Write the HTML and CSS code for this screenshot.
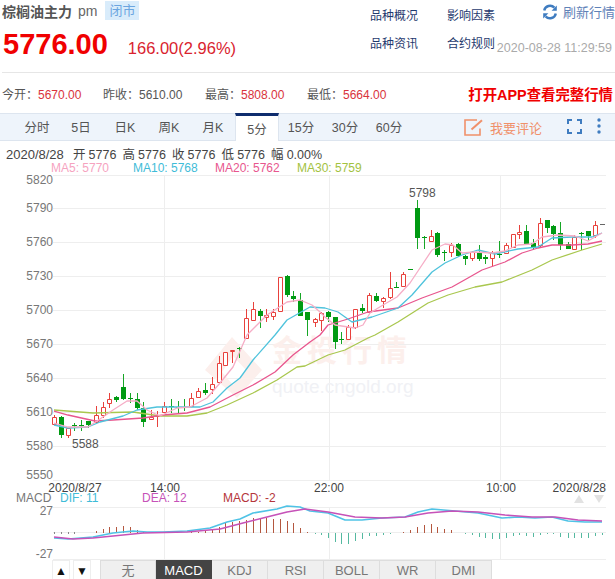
FILE: index.html
```html
<!DOCTYPE html>
<html lang="zh-CN">
<head>
  <meta charset="UTF-8" />
  <meta name="viewport" content="width=device-width, initial-scale=1.0" />
  <title>棕榈油主力 pm</title>
  <link rel="stylesheet" href="styles.css">
</head>
<body>
  <div class="quote-head">
    <div class="quote-main">
      <div class="quote-name">
        <b>棕榈油主力</b>
        <span class="quote-code">pm</span>
        <span class="quote-state">闭市</span>
      </div>
      <div class="quote-price">
        <span class="price-now">5776.00</span>
        <span class="price-change">166.00(2.96%)</span>
      </div>
    </div>
    <div class="quote-links">
      <a href="#">品种概况</a>
      <a href="#">影响因素</a>
      <a href="#">品种资讯</a>
      <a href="#">合约规则</a>
    </div>
    <div class="quote-side">
      <a class="refresh" href="#">
        <svg class="refresh-icon" viewBox="0 0 16 16">
          <path d="M2.2 6.6A6 6 0 0 1 12.4 3.6" />
          <path d="M13.8 9.4A6 6 0 0 1 3.6 12.4" />
          <path class="fill" d="M14.8 1.6V6.8H9.6z" />
          <path class="fill" d="M1.2 14.4V9.2H6.4z" />
        </svg>
        刷新行情
      </a>
      <span class="quote-time">2020-08-28 11:29:59</span>
    </div>
  </div>

  <div class="stats">
    <span class="stat">今开：<em>5670.00</em></span>
    <span class="stat">昨收：5610.00</span>
    <span class="stat">最高：<em>5808.00</em></span>
    <span class="stat">最低：<em>5664.00</em></span>
    <a class="open-app" href="#">打开APP查看完整行情</a>
  </div>

  <div class="period-bar">
    <a class="period" href="#">分时</a>
    <a class="period" href="#">5日</a>
    <a class="period" href="#">日K</a>
    <a class="period" href="#">周K</a>
    <a class="period" href="#">月K</a>
    <a class="period active" href="#">5分</a>
    <a class="period" href="#">15分</a>
    <a class="period" href="#">30分</a>
    <a class="period" href="#">60分</a>
    <a class="comment" href="#">
      <svg class="comment-icon" viewBox="0 0 20 17">
        <path d="M16 9.5V16H1V1H13" />
        <path d="M7.5 10.5L18 1.2" stroke-width="2" />
      </svg>
      我要评论
    </a>
    <svg class="full-icon" viewBox="0 0 15 15">
      <path d="M1 5V1H5M10 1H14V5M14 10V14H10M5 14H1V10" />
    </svg>
    <svg class="more-icon" viewBox="0 0 4 16">
      <circle cx="2" cy="2" r="1.7" />
      <circle cx="2" cy="8" r="1.7" />
      <circle cx="2" cy="14" r="1.7" />
    </svg>
  </div>

  <div class="bar-info"><span class="bar-date">2020/8/28</span>&nbsp; 开 5776&nbsp; 高 5776&nbsp; 收 5776&nbsp; 低 5776&nbsp; 幅 0.00%</div>

  <svg class="chart" viewBox="0 160 615 400">
    <!-- legend -->
    <text class="ma5-text" x="51" y="172">MA5: 5770</text>
    <text class="ma10-text" x="133" y="172">MA10: 5768</text>
    <text class="ma20-text" x="215" y="172">MA20: 5762</text>
    <text class="ma30-text" x="297" y="172">MA30: 5759</text>

    <!-- grid -->
    <path class="grid" d="M53 175.5H606M53 208.5H606M53 242.5H606M53 276.5H606M53 310.5H606M53 344.5H606M53 378.5H606M53 412.5H606M53 446.5H606M53 480.5H606M164.5 175V480M329.5 175V480M500.5 175V480" />
    <path class="grid" d="M53 507.5H606M53 559.5H606M164.5 507V559M329.5 507V559M500.5 507V559" />

    <!-- watermark -->
    <path class="mark-logo" d="M205 370L232 337L262 370L237 398ZM222 372L233 385L246 370L233 356Z" fill-rule="evenodd" />
    <text class="mark-name" x="272" y="361">金投行情</text>
    <text class="mark-url" x="272" y="393">quote.cngold.org</text>

    <!-- price axis -->
    <g class="axis-y">
      <text x="53" y="184">5820</text>
      <text x="53" y="212">5790</text>
      <text x="53" y="246">5760</text>
      <text x="53" y="280">5730</text>
      <text x="53" y="314">5700</text>
      <text x="53" y="348">5670</text>
      <text x="53" y="382">5640</text>
      <text x="53" y="416">5610</text>
      <text x="53" y="450">5580</text>
      <text x="53" y="479">5550</text>
      <text x="53" y="515">27</text>
      <text x="53" y="558">-27</text>
    </g>

    <!-- candles -->
    <path class="wick-up" d="M54.5 415V425M68.5 428V438M96.5 406V423M103.5 402V418M109.5 393V408M151.5 410V419M157.5 411V427M164.5 402V413M191.5 393V407M198.5 388V398M212.5 377V394M219.5 356V383M225.5 352V365M232.5 350V363M246.5 309V338M253.5 302V320M266.5 309V322M273.5 309V320M280.5 277V311M315.5 318V327M321.5 312V331M348.5 325V339M355.5 309V329M369.5 293V312M383.5 297V308M390.5 272V299M403.5 272V286M431.5 230V241M451.5 243V257M472.5 251V261M492.5 251V266M506.5 243V254M513.5 234V247M519.5 225V239M540.5 218V248M574.5 235V250M595.5 221V238" />
    <path class="body-up" d="M52.5 417.5h4v7h-4zM66.5 428.5h4v7h-4zM94.5 415.5h4v7h-4zM101.5 407.5h4v8h-4zM107.5 399.5h4v4h-4zM149.5 417.5h4v2h-4zM155.5 415.5h4v1h-4zM162.5 406.5h4v6h-4zM189.5 398.5h4v8h-4zM196.5 391.5h4v6h-4zM210.5 384.5h4v5h-4zM217.5 363.5h4v19h-4zM223.5 352.5h4v13h-4zM230.5 350.5h4v1h-4zM244.5 318.5h4v20h-4zM251.5 309.5h4v11h-4zM264.5 315.5h4v2h-4zM271.5 312.5h4v4h-4zM278.5 277.5h4v34h-4zM313.5 319.5h4v3h-4zM319.5 313.5h4v7h-4zM346.5 327.5h4v12h-4zM353.5 309.5h4v18h-4zM367.5 295.5h4v17h-4zM381.5 298.5h4v3h-4zM388.5 288.5h4v9h-4zM401.5 274.5h4v12h-4zM429.5 236.5h4v5h-4zM449.5 245.5h4v7h-4zM470.5 252.5h4v6h-4zM490.5 252.5h4v6h-4zM504.5 245.5h4v8h-4zM511.5 234.5h4v13h-4zM517.5 232.5h4v2h-4zM538.5 223.5h4v22h-4zM572.5 237.5h4v12h-4zM593.5 225.5h4v10h-4z" />
    <path class="wick-down" d="M61.5 416V438M74.5 423V431M81.5 420V431M88.5 421V428M116.5 396V402M123.5 374V400M130.5 393V403M137.5 393V410M143.5 402V427M171.5 399V413M178.5 401V413M184.5 399V411M205.5 383V395M239.5 347V358M260.5 309V328M287.5 275V297M293.5 291V302M300.5 293V316M307.5 312V336M328.5 311V322M335.5 317V349M341.5 332V344M362.5 304V313M376.5 293V302M396.5 282V288M417.5 200V249M424.5 236V249M437.5 232V257M444.5 250V261M458.5 243V257M465.5 255V265M479.5 245V261M485.5 255V264M499.5 241V258M526.5 225V245M533.5 239V250M547.5 220V233M553.5 225V240M560.5 222V250M568.5 242V249M581.5 232V250M588.5 231V240" />
    <path class="body-down" d="M59 417h5v18h-5zM72 425h5v1h-5zM79 425h5v1h-5zM86 421h5v4h-5zM114 397h5v3h-5zM121 387h5v12h-5zM128 398h5v1h-5zM135 399h5v9h-5zM141 408h5v14h-5zM169 406h5v1h-5zM176 407h5v1h-5zM182 407h5v1h-5zM203 390h5v3h-5zM237 348h5v1h-5zM258 311h5v5h-5zM285 276h5v19h-5zM291 296h5v3h-5zM298 300h5v16h-5zM305 312h5v8h-5zM326 312h5v5h-5zM333 317h5v25h-5zM339 339h5v1h-5zM360 308h5v3h-5zM374 296h5v5h-5zM394 287h5v1h-5zM408 269h5v1h-5zM415 208h5v30h-5zM422 237h5v1h-5zM435 233h5v22h-5zM442 252h5v1h-5zM456 244h5v12h-5zM463 256h5v3h-5zM477 252h5v7h-5zM483 257h5v2h-5zM497 254h5v1h-5zM524 231h5v13h-5zM531 243h5v4h-5zM545 220h5v8h-5zM551 226h5v8h-5zM558 233h5v12h-5zM566 244h5v5h-5zM579 233h5v1h-5zM586 231h5v5h-5z" />
    <path class="body-flat" d="M600 224h5v1h-5z" />

    <!-- moving averages -->
    <polyline class="ma30" points="54,410 93,413 133,412 160,416 187,416 207,413 227,405 253,393 277,380 297,367 305,366 328,355 345,350 368,338 375,335 398,322 428,303 448,295 475,287 502,282 532,270 552,260 582,250 602,244" />
    <polyline class="ma20" points="54,411 68,415 95,421 113,420 143,418 163,415 187,413 210,407 233,395 253,385 275,372 293,355 310,342 320,335 328,325 348,319 368,312 398,308 422,298 452,287 468,278 482,270 505,262 522,253 538,248 552,245 572,245 588,244 602,241" />
    <polyline class="ma10" points="54,425 68,428 88,427 100,422 123,416 137,410 157,407 177,407 200,407 213,402 227,388 240,378 253,360 275,335 287,320 310,307 325,308 338,312 352,322 372,317 398,308 412,295 432,272 445,263 462,255 478,250 495,254 518,249 538,247 552,238 572,237 592,237 602,233" />
    <polyline class="ma5" points="54,423 68,427 88,427 100,419 113,410 127,401 137,401 147,410 160,416 177,408 190,407 207,398 220,383 233,367 247,335 267,315 287,302 300,300 312,305 320,312 325,317 335,325 355,328 363,325 370,313 383,305 397,297 410,283 422,265 432,250 445,244 453,245 462,253 475,252 492,253 505,251 518,245 532,244 542,237 558,235 575,236 588,241 602,233" />

    <!-- extreme labels -->
    <text class="peak" x="409" y="197">5798</text>
    <text class="peak" x="72" y="448">5588</text>

    <!-- time axis -->
    <g class="axis-x">
      <text x="75" y="492">2020/8/27</text>
      <text x="165" y="492">14:00</text>
      <text x="329" y="492">22:00</text>
      <text x="501" y="492">10:00</text>
      <text x="606" y="492">2020/8/28</text>
    </g>

    <!-- macd -->
    <text class="macd-label" x="16" y="502">MACD</text>
    <text class="dif-text" x="60" y="502">DIF: 11</text>
    <text class="dea-text" x="142" y="502">DEA: 12</text>
    <text class="macd-text" x="223" y="502">MACD: -2</text>
    <path class="scroll-arrow" d="M574 503L579 495L584 503ZM594 495H604L599 503Z" />
    <path class="grid" d="M53 532.5H606" />
    <path class="hist-flat" d="M54.5 532v2M61.5 532v2M68.5 532v2M74.5 532v2" />
    <path class="hist-up" d="M96.5 533v-2M103.5 533v-4M109.5 533v-6M116.5 533v-6M123.5 533v-7M130.5 533v-6M137.5 533v-3M143.5 533v-1M191.5 533v-1M198.5 533v-1M205.5 533v-2M212.5 533v-4M219.5 533v-6M225.5 533v-10M232.5 533v-11M239.5 533v-12M246.5 533v-13M253.5 533v-15M260.5 533v-15M266.5 533v-15M273.5 533v-14M280.5 533v-14M287.5 533v-12M293.5 533v-10M300.5 533v-5M307.5 533v-1M403.5 533v-1M410.5 533v-3M417.5 533v-6M424.5 533v-8M431.5 533v-9M437.5 533v-6M444.5 533v-4M451.5 533v-3" />
    <path class="hist-down" d="M315.5 533v1M321.5 533v2M328.5 533v5M335.5 533v9M341.5 533v11M348.5 533v11M355.5 533v8M362.5 533v6M369.5 533v3M376.5 533v3M383.5 533v2M390.5 533v1M465.5 533v1M472.5 533v2M479.5 533v4M485.5 533v5M492.5 533v6M499.5 533v6M506.5 533v5M513.5 533v3M519.5 533v2M526.5 533v3M533.5 533v4M540.5 533v2M547.5 533v1M553.5 533v1M560.5 533v4M568.5 533v5M574.5 533v5M581.5 533v5M588.5 533v5M595.5 533v3M602.5 533v2" />
    <polyline class="dif" points="54,538 68,539 93,537 113,533 133,531 147,532 163,532 187,531 210,528 227,522 240,519 253,513 277,509 287,506 300,507 310,511 328,513 345,520 362,520 382,518 405,517 418,512 432,509 455,511 478,513 502,518 518,517 535,518 552,517 568,521 585,522 602,522" />
    <polyline class="dea" points="54,537 73,539 93,538 113,536 143,533 187,532 220,529 243,523 267,517 287,512 305,509 328,512 355,517 382,518 405,517 428,513 452,511 478,512 505,515 532,517 555,517 578,520 602,521" />
  </svg>

  <div class="indicator-bar">
    <div class="step-btns">
      <a class="step-btn" href="#">▲</a>
      <a class="step-btn" href="#">▼</a>
    </div>
    <div class="indicators">
      <a class="indicator" href="#">无</a>
      <a class="indicator active" href="#">MACD</a>
      <a class="indicator" href="#">KDJ</a>
      <a class="indicator" href="#">RSI</a>
      <a class="indicator" href="#">BOLL</a>
      <a class="indicator" href="#">WR</a>
      <a class="indicator" href="#">DMI</a>
    </div>
  </div>
</body>
</html>
```

FILE: styles.css
```css
html,
body {
  height: 579px;
}

body {
  margin: 0;
  width: 615px;
  overflow: hidden;
  background: #ffffff;
  color: #444444;
  font-family: "Liberation Sans", "Noto Sans CJK SC", sans-serif;
  font-size: 12px;
}

a {
  color: inherit;
  text-decoration: none;
}

.quote-head {
  position: relative;
  display: flex;
  height: 72px;
  margin-left: 2px;
  border-bottom: 1px solid #e6e6e6;
}

.quote-main {
  width: 368px;
}

.quote-name {
  display: flex;
  align-items: center;
  height: 21px;
  font-size: 14px;
  color: #555555;
}

.quote-code {
  margin-left: 6px;
  color: #666666;
}

.quote-state {
  margin-left: 8px;
  padding: 0 4px;
  height: 19px;
  line-height: 19px;
  background: #d9ecfb;
  color: #6ba5e0;
  font-size: 13px;
}

.quote-price {
  display: flex;
  align-items: baseline;
  margin-top: 7px;
  margin-left: 1px;
}

.price-now {
  font-size: 29px;
  font-weight: 700;
  color: #f00000;
}

.price-change {
  margin-left: 20px;
  font-size: 16.5px;
  color: #d9232e;
}

.quote-links {
  display: grid;
  grid-template-columns: 77px 60px;
  grid-auto-rows: 28px;
  padding-top: 2px;
  color: #1f3a6e;
  line-height: 28px;
}

.quote-side {
  flex: 1;
}

.refresh {
  position: absolute;
  top: 2px;
  right: 0;
  display: flex;
  align-items: center;
  gap: 5px;
  font-size: 13px;
  color: #5f82b8;
  white-space: nowrap;
}

.refresh-icon {
  width: 16px;
  height: 16px;
  fill: none;
  stroke: #3f7cc0;
  stroke-width: 2.4;
}

.refresh-icon .fill {
  fill: #3f7cc0;
  stroke: none;
}

.quote-time {
  position: absolute;
  top: 41px;
  right: 3px;
  font-size: 12.5px;
  color: #aaaaaa;
}

.stats {
  display: flex;
  align-items: center;
  height: 40px;
  padding-left: 2px;
}

.stat {
  width: 102px;
  color: #555555;
}

.stat:first-child {
  width: 101px;
}

.stat em {
  font-style: normal;
  color: #d9333c;
}

.open-app {
  margin-left: auto;
  margin-right: 2px;
  font-size: 14.4px;
  font-weight: 700;
  color: #f00000;
}

.period-bar {
  position: relative;
  display: flex;
  align-items: stretch;
  height: 26px;
  padding-left: 15px;
  background: #eef4fb;
  border-top: 1px solid #dde5ef;
  border-bottom: 1px solid #dde5ef;
}

.period {
  width: 44px;
  text-align: center;
  line-height: 28px;
  font-size: 12.5px;
  color: #555555;
}

.period.active {
  margin-top: -1px;
  height: 25px;
  background: #ffffff;
  border-top: 3px solid #0f2d6e;
  border-left: 1px solid #dde5ef;
  border-right: 1px solid #dde5ef;
  box-sizing: content-box;
  width: 42px;
}

.comment {
  position: absolute;
  top: 0;
  left: 464px;
  display: flex;
  align-items: center;
  gap: 6px;
  height: 26px;
  font-size: 13px;
  color: #f0906a;
}

.comment-icon {
  width: 20px;
  height: 17px;
  fill: none;
  stroke: #f0906a;
  stroke-width: 1.6;
}

.full-icon {
  position: absolute;
  top: 5px;
  left: 567px;
  width: 15px;
  height: 15px;
  fill: none;
  stroke: #3f7cc0;
  stroke-width: 2;
}

.more-icon {
  position: absolute;
  top: 4px;
  left: 597px;
  width: 4px;
  height: 16px;
  fill: #3f7cc0;
}

.bar-info {
  height: 19px;
  padding: 4px 0 0 6px;
  box-sizing: border-box;
  line-height: 20px;
  font-size: 12.5px;
  word-spacing: -0.4px;
  color: #444444;
  white-space: nowrap;
}

.bar-date {
  margin-right: 3px;
  font-size: 13px;
}

.chart {
  display: block;
  width: 615px;
  height: 400px;
  font-size: 12px;
}

.grid {
  fill: none;
  stroke: #eeeeee;
  stroke-width: 1;
}

.mark-logo {
  fill: #fcefec;
}

.mark-name {
  fill: #fcefec;
  font-size: 30px;
  font-weight: 700;
  letter-spacing: 5px;
}

.mark-url {
  fill: #f0f1f5;
  font-size: 19px;
}

.axis-y text {
  fill: #777777;
  text-anchor: end;
}

.axis-x text {
  fill: #444444;
  text-anchor: middle;
}

.axis-x text:last-child {
  text-anchor: end;
}

.peak {
  fill: #555555;
}

.wick-up {
  fill: none;
  stroke: #e8413c;
}

.body-up {
  fill: #ffffff;
  stroke: #e8413c;
}

.wick-down {
  fill: none;
  stroke: #16a626;
}

.body-down {
  fill: #009a12;
}

.body-flat {
  fill: #666666;
}

polyline {
  fill: none;
  stroke-width: 1.3;
  stroke-linejoin: round;
}

.ma5 { stroke: #f6adc6; }
.ma10 { stroke: #4fc3dc; }
.ma20 { stroke: #e8568e; }
.ma30 { stroke: #a9c74e; }

.ma5-text { fill: #f6a3bf; }
.ma10-text { fill: #3fbcd8; }
.ma20-text { fill: #e8568e; }
.ma30-text { fill: #a3c23f; }

.macd-label { fill: #777777; }
.dif-text { fill: #3fbcd8; }
.dea-text { fill: #c652b8; }
.macd-text { fill: #b5353a; }

.scroll-arrow {
  fill: #e2e2e2;
}

.hist-flat {
  fill: none;
  stroke: #888888;
}

.hist-up {
  fill: none;
  stroke: #b4573f;
}

.hist-down {
  fill: none;
  stroke: #55b9a0;
}

.dif {
  stroke: #4fc3e6;
  stroke-width: 1.6;
}

.dea {
  stroke: #c652b8;
  stroke-width: 1.6;
}

.indicator-bar {
  display: flex;
  height: 19px;
  padding-left: 52px;
}

.step-btns {
  display: flex;
  gap: 3px;
  width: 48px;
}

.step-btn {
  width: 18px;
  height: 19px;
  border: 1px solid #eeeeee;
  border-bottom: 0;
  box-sizing: border-box;
  text-align: center;
  line-height: 20px;
  font-size: 12px;
  color: #111111;
}

.indicators {
  display: flex;
}

.indicator {
  width: 56px;
  height: 22px;
  background: #efefef;
  border: 1px solid #dddddd;
  border-left-width: 0;
  box-sizing: border-box;
  text-align: center;
  line-height: 19px;
  font-size: 13px;
  color: #777777;
}

.indicator:first-child {
  border-left-width: 1px;
}

.indicator.active {
  background: #444444;
  border-color: #444444;
  color: #ffffff;
}
```
